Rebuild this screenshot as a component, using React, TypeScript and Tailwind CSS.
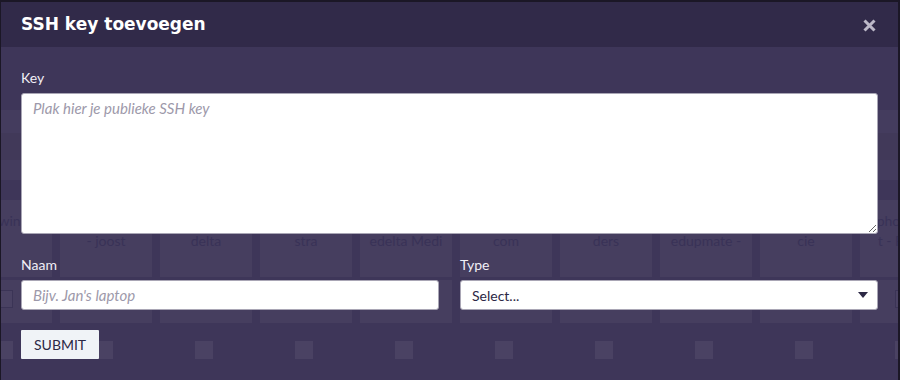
import React from "react";

const cols = [
  { l1: "Twin", l2: "" },
  { l1: "", l2: "- joost" },
  { l1: "", l2: "delta" },
  { l1: "", l2: "stra" },
  { l1: "", l2: "edelta Medi" },
  { l1: "", l2: "com" },
  { l1: "", l2: "ders" },
  { l1: "", l2: "edupmate -" },
  { l1: "", l2: "cie" },
  { l1: "phone 11", l2: "t - Phone" },
];

function Ghost() {
  return (
    <div className="ml-[1px] mr-[2px] mt-[2px] h-[378px] overflow-hidden bg-[#3e3659] text-[14px] text-[#393257]">
      <div className="h-[108px]" />
      <div className="h-[23px] bg-[#443c5e]" />
      <div className="h-[27px] bg-[#413959]" />
      <div className="h-[20px] bg-[#443c5e]" />
      <div className="h-[20px]" />
      <div className="ml-[-41px] flex gap-2">
        {cols.map((c, i) => (
          <div key={i} className="flex h-[77px] w-[92px] shrink-0 flex-col items-center justify-start bg-[#463e5f] pt-[11px] leading-[20px]">
            <span className="whitespace-nowrap">{c.l1 || "\u00a0"}</span>
            <span className="whitespace-nowrap">{c.l2 || "\u00a0"}</span>
          </div>
        ))}
      </div>
      <div className="ml-[-41px] mt-[3px] flex gap-2">
        {cols.map((_, i) => (
          <div key={i} className="flex h-[43px] w-[92px] shrink-0 items-start bg-[#463e5f] pl-[35px] pt-[10px]">
            <div className="h-[18px] w-[18px] border border-[#3b3456] bg-[#4a4263]" />
          </div>
        ))}
      </div>
      <div className="ml-[-41px] mt-[18px] flex gap-2">
        {cols.map((_, i) => (
          <div key={i} className="w-[92px] shrink-0 pl-[35px]">
            <div className="h-[18px] w-[18px] bg-[#4a4263]" />
          </div>
        ))}
      </div>
    </div>
  );
}

export default function App() {
  return (
    <div
      className="relative h-[380px] w-[900px] overflow-hidden bg-[#1b1726]"
      style={{ fontFamily: "Lato, 'Noto Sans', sans-serif" }}
    >
      <Ghost />
      <div className="absolute left-[1px] right-[2px] top-[2px] bottom-0 flex flex-col">
        <div className="flex h-[45px] shrink-0 items-center justify-between bg-[#312a49] pl-[20px] pr-[22px]">
          <h2
            className="text-[17px] font-bold leading-none text-white"
            style={{ fontFamily: "'DejaVu Sans', sans-serif" }}
          >
            SSH key toevoegen
          </h2>
          <svg width="13" height="13" viewBox="0 0 13 13" className="mt-[1px]">
            <path d="M1.5 1.5 L11.5 11.5 M11.5 1.5 L1.5 11.5" stroke="#bcb8c8" strokeWidth="3" strokeLinecap="butt" />
          </svg>
        </div>
        <div className="flex flex-col px-[20px] pt-[21px]">
          <label className="mb-[5px] block text-[14px] leading-[20px] text-[#f1eff6]">Key</label>
          <textarea
            placeholder="Plak hier je publieke SSH key"
            className="h-[141px] w-full rounded-[3px] border border-[#a9a6b5] bg-white px-[11px] py-[4px] text-[15px] leading-[20px] text-[#2c2845] placeholder:italic placeholder:text-[#9d99aa] focus:outline-none"
          />
          <div className="mt-[21px] grid grid-cols-2 gap-[21px]">
            <div className="flex flex-col">
              <label className="mb-[5px] block text-[14px] leading-[20px] text-[#f1eff6]">Naam</label>
              <input
                placeholder="Bijv. Jan's laptop"
                className="h-[30px] w-full rounded-[3px] border border-[#a9a6b5] bg-white px-[11px] text-[15px] text-[#2c2845] placeholder:italic placeholder:text-[#9d99aa] focus:outline-none"
              />
            </div>
            <div className="flex flex-col">
              <label className="mb-[5px] block text-[14px] leading-[20px] text-[#f1eff6]">Type</label>
              <div className="flex h-[30px] w-full items-center justify-between rounded-[3px] border border-[#a9a6b5] bg-white pl-[11px] pr-[9px] text-[14px] text-[#2c2845]">
                <span>Select...</span>
                <svg width="10" height="6" viewBox="0 0 10 6">
                  <path d="M0 0 L10 0 L5 6 Z" fill="#2c2845" />
                </svg>
              </div>
            </div>
          </div>
          <div className="mt-[20px]">
            <button className="h-[29px] rounded-[1px] bg-[#f0f3f7] px-[13px] text-[14px] uppercase text-[#2c2845]">
              Submit
            </button>
          </div>
        </div>
      </div>
    </div>
  );
}
